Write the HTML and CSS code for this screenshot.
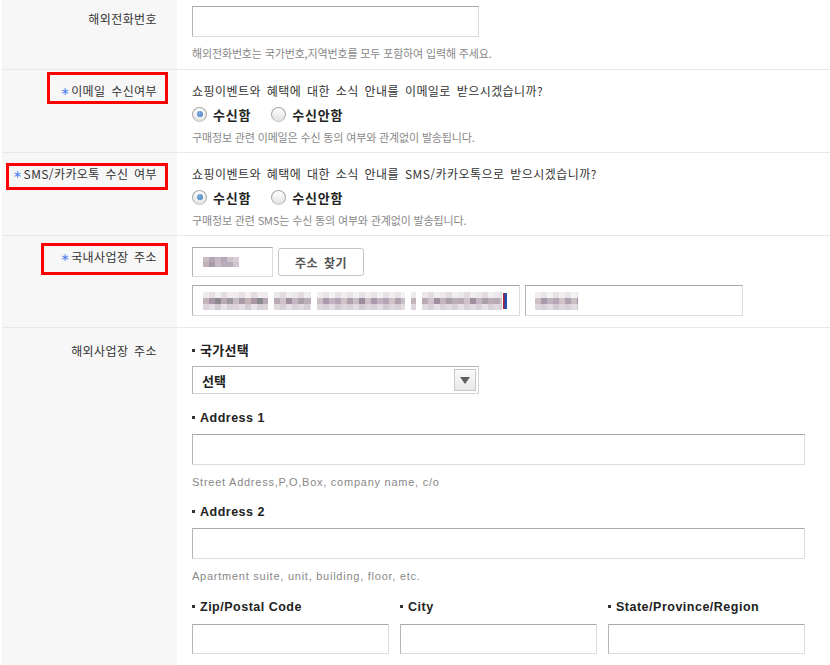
FILE: index.html
```html
<!DOCTYPE html>
<html lang="ko">
<head>
<meta charset="utf-8">
<title>회원정보</title>
<link rel="stylesheet" href="styles.css">
</head>
<body>
<div class="form">
  <div class="row row-phone">
    <div class="th">해외전화번호</div>
    <div class="td">
      <div class="field w287"></div>
      <p class="help">해외전화번호는 국가번호,지역번호를 모두 포함하여 입력해 주세요.</p>
    </div>
  </div>

  <div class="row row-opt">
    <div class="th"><span class="req">∗</span>이메일 수신여부<span class="mark mark-email"></span></div>
    <div class="td">
      <p class="q">쇼핑이벤트와 혜택에 대한 소식 안내를 이메일로 받으시겠습니까?</p>
      <div class="radios">
        <span class="radio on"></span><span class="rlabel">수신함</span>
        <span class="radio"></span><span class="rlabel">수신안함</span>
      </div>
      <p class="help">구매정보 관련 이메일은 수신 동의 여부와 관계없이 발송됩니다.</p>
    </div>
  </div>

  <div class="row row-opt">
    <div class="th"><span class="req">∗</span>SMS/카카오톡 수신 여부<span class="mark mark-sms"></span></div>
    <div class="td">
      <p class="q">쇼핑이벤트와 혜택에 대한 소식 안내를 SMS/카카오톡으로 받으시겠습니까?</p>
      <div class="radios">
        <span class="radio on"></span><span class="rlabel">수신함</span>
        <span class="radio"></span><span class="rlabel">수신안함</span>
      </div>
      <p class="help">구매정보 관련 SMS는 수신 동의 여부와 관계없이 발송됩니다.</p>
    </div>
  </div>

  <div class="row row-addr">
    <div class="th"><span class="req">∗</span>국내사업장 주소<span class="mark mark-addr"></span></div>
    <div class="td">
      <div class="line">
        <div class="field zip"><span class="mosaic m-zip"></span></div>
        <button class="btn" type="button">주소 찾기</button>
      </div>
      <div class="line">
        <div class="field addr1">
          <span class="mosaic m-a" style="width:65px"></span>
          <span class="mosaic m-b" style="width:37px"></span>
          <span class="mosaic m-c" style="width:88px"></span>
          <span class="mosaic m-a" style="width:5px"></span>
          <span class="mosaic m-b" style="width:80px"></span>
          <span class="cursor"></span>
        </div>
        <div class="field addr2"><span class="mosaic m-c" style="width:43px"></span></div>
      </div>
    </div>
  </div>

  <div class="row row-intl">
    <div class="th">해외사업장 주소</div>
    <div class="td">
      <p class="sub ko"><span class="bul"></span>국가선택</p>
      <div class="select"><span>선택</span><span class="arrow"></span></div>
      <p class="sub en gap15"><span class="bul"></span>Address 1</p>
      <div class="field full"></div>
      <p class="help en">Street Address,P,O,Box, company name, c/o</p>
      <p class="sub en gap14"><span class="bul"></span>Address 2</p>
      <div class="field full"></div>
      <p class="help en">Apartment suite, unit, building, floor, etc.</p>
      <div class="cols">
        <div class="col">
          <p class="sub en"><span class="bul"></span>Zip/Postal Code</p>
          <div class="field h30"></div>
        </div>
        <div class="col">
          <p class="sub en"><span class="bul"></span>City</p>
          <div class="field h30"></div>
        </div>
        <div class="col">
          <p class="sub en"><span class="bul"></span>State/Province/Region</p>
          <div class="field h30"></div>
        </div>
      </div>
    </div>
  </div>
</div>
</body>
</html>
```

FILE: styles.css
```css
* { box-sizing: border-box; }
html, body { margin: 0; padding: 0; background: #fff; }
body {
  font-family: "Noto Sans CJK KR", "Liberation Sans", sans-serif;
  font-size: 12px;
  color: #333;
  width: 830px;
  height: 665px;
  overflow: hidden;
}
p { margin: 0; }

.form { margin-left: 2px; }

.row {
  display: grid;
  grid-template-columns: 175px 1fr;
  border-bottom: 1px solid #e8e8e8;
}
.th {
  position: relative;
  background: #f7f7f7;
  text-align: right;
  padding-right: 20px;
  line-height: 16px;
  color: #333;
  letter-spacing: 0.4px;
  word-spacing: 2px;
}
.td {
  padding-left: 15px;
  padding-right: 25px;
}

.row-phone .th { padding-top: 11px; }
.row-phone .td { padding-top: 6px; padding-bottom: 8px; }
.row-opt .th { padding-top: 13px; }
.row-opt .td { padding-top: 13px; padding-bottom: 7px; }
.row-addr .th { padding-top: 13px; }
.row-addr .td { padding-top: 11px; padding-bottom: 11px; }
.row-intl .th { padding-top: 15px; }
.row-intl .td { padding-top: 14px; padding-bottom: 30px; }

.req {
  color: #4d7ff0;
  font-family: "DejaVu Sans", sans-serif;
  font-size: 11px;
  margin-right: 1px;
  position: relative;
  top: -1px;
}

.mark {
  position: absolute;
  border: 3px solid #ff0000;
}
.mark-email { left: 45px; top: 2px; width: 121px; height: 32px; }
.mark-sms { left: 4px; top: 10px; width: 162px; height: 27px; }
.mark-addr { left: 39px; top: 7px; width: 127px; height: 32px; }

.field {
  height: 31px;
  border: 1px solid #dcdcdc;
  border-top-color: #a9a9a9;
  border-left-color: #b5b5b5;
  background: #fff;
}
.w287 { width: 287px; }
.full { width: 613px; }
.h30 { height: 30px; }

.help {
  margin-top: 8px;
  line-height: 16px;
  font-size: 11px;
  color: #888;
  letter-spacing: -0.15px;
}
.help.en {
  margin-top: 9px;
  font-family: "Liberation Sans", sans-serif;
  letter-spacing: 0.75px;
}

.q {
  line-height: 16px;
  font-size: 12px;
  color: #333;
  letter-spacing: 0.45px;
  word-spacing: 2px;
}

.radios {
  display: flex;
  align-items: center;
  height: 16px;
  margin-top: 7px;
  margin-bottom: -1px;
}
.radio {
  width: 15px;
  height: 15px;
  border-radius: 50%;
  border: 1px solid #a8a8a8;
  border-bottom-color: #c8c8c8;
  background: linear-gradient(#ffffff, #e2e2e2);
  display: flex;
  align-items: center;
  justify-content: center;
  margin-right: 6px;
}
.radio.on::after {
  content: "";
  width: 6px;
  height: 6px;
  border-radius: 50%;
  background: radial-gradient(circle at 40% 35%, #7fb0e0, #3f78b8);
}
.rlabel {
  font-weight: bold;
  font-size: 13px;
  color: #222;
  margin-right: 20px;
  letter-spacing: 0.8px;
}

.line { display: flex; gap: 5px; align-items: center; }
.line + .line { margin-top: 8px; }
.zip {
  width: 81px;
  height: 30px;
  display: flex;
  align-items: center;
  padding-left: 10px;
}
.btn {
  width: 86px;
  height: 28px;
  border: 1px solid #c4c4c4;
  border-radius: 3px;
  background: #fff;
  font-family: "Noto Sans CJK KR", sans-serif;
  font-size: 12px;
  font-weight: bold;
  color: #555;
  padding: 0;
  letter-spacing: 0.5px;
  word-spacing: 2px;
}
.addr1 {
  width: 328px;
  display: flex;
  align-items: center;
  padding-left: 10px;
  gap: 6px;
}
.addr2 {
  width: 218px;
  display: flex;
  align-items: center;
  padding-left: 9px;
}

.mosaic {
  display: inline-block;
  height: 18px;
  background-repeat: no-repeat;
  background-size: 100% 6px;
  background-position: 0 0, 0 6px, 0 12px;
}
.m-zip {
  width: 36px;
  height: 10px;
  background-size: 100% 5px;
  background-position: 0 0, 0 5px;
  background-image:
    repeating-linear-gradient(90deg, #cbbcc4 0 6px, #b5a6b3 6px 12px, #c6b9c3 12px 18px, #b3a6b6 18px 24px, #cfc3cb 24px 30px, #d9d0d6 30px 36px),
    repeating-linear-gradient(90deg, #bfb0ba 0 6px, #a99aa9 6px 12px, #c8bbc6 12px 18px, #bbaebb 18px 24px, #b9acba 24px 30px, #cec5cf 30px 36px);
}
.m-a {
  background-image:
    repeating-linear-gradient(90deg, #efeaed 0 6px, #e6e0e5 6px 12px, #f3f0f2 12px 18px, #e3dde2 18px 24px, #f0ecef 24px 30px),
    repeating-linear-gradient(90deg, #c4b3bb 0 6px, #a996a6 6px 12px, #8c8a90 12px 18px, #b9aab6 18px 24px, #9c9a9c 24px 30px, #c9bcc5 30px 36px, #a89aa8 36px 42px),
    repeating-linear-gradient(90deg, #dcd4da 0 6px, #e4dde2 6px 12px, #d4ccd4 12px 18px, #e8e2e6 18px 24px, #d8d1d9 24px 30px);
}
.m-b {
  background-image:
    repeating-linear-gradient(90deg, #ece7eb 0 6px, #e2dce2 6px 12px, #f1eef0 12px 18px),
    repeating-linear-gradient(90deg, #b8a9b4 0 6px, #cfc2ca 6px 12px, #9f8fa0 12px 18px, #c3b6c1 18px 24px, #a9a0aa 24px 30px, #bcaeb6 30px 36px),
    repeating-linear-gradient(90deg, #e0d9de 0 6px, #d6cfd6 6px 12px, #e6e0e4 12px 18px, #d9d2da 18px 24px);
}
.m-c {
  background-image:
    repeating-linear-gradient(90deg, #f1edf0 0 6px, #e9e4e8 6px 12px, #f5f2f4 12px 18px, #e6e1e5 18px 24px),
    repeating-linear-gradient(90deg, #cdbfc4 0 6px, #a79aae 6px 12px, #c2b4c0 12px 18px, #b4a6b6 18px 24px, #d0c2c6 24px 30px, #aea2b0 30px 36px, #c8bec6 36px 42px, #9a8c9c 42px 48px),
    repeating-linear-gradient(90deg, #ddd6db 0 6px, #d7d0d8 6px 12px, #e3dde1 12px 18px, #d2cbd4 18px 24px);
}
.cursor {
  width: 4px;
  height: 16px;
  margin-left: -5px;
  background: linear-gradient(90deg, #b02030 0 1px, #5a3a70 1px 2px, #2050b0 2px 4px);
}

.sub {
  line-height: 16px;
  font-weight: bold;
  color: #222;
}
.bul {
  display: inline-block;
  width: 3px;
  height: 3px;
  background: #333;
  margin-right: 5px;
  vertical-align: middle;
  position: relative;
  top: -1px;
}
.sub.ko { font-size: 13px; letter-spacing: 0.3px; }
.sub.en {
  font-family: "Liberation Sans", sans-serif;
  font-size: 12.5px;
  letter-spacing: 0.5px;
}
.sub + .field, .sub + .select { margin-top: 8px; }
.gap15 { margin-top: 16px; }
.gap14 { margin-top: 14px; }

.select {
  width: 287px;
  height: 28px;
  border: 1px solid #d2d2d2;
  border-top-color: #b4b4b4;
  border-left-color: #b4b4b4;
  display: flex;
  align-items: center;
  justify-content: space-between;
  padding: 0 2px 0 9px;
  font-weight: bold;
  font-size: 13px;
  color: #222;
}
.arrow {
  width: 22px;
  height: 22px;
  border: 1px solid #c8c8c8;
  background: linear-gradient(#fafafa, #e8e8e8);
  position: relative;
}
.arrow::after {
  content: "";
  position: absolute;
  left: 5px;
  top: 7px;
  border-left: 5px solid transparent;
  border-right: 5px solid transparent;
  border-top: 7px solid #5e5e5e;
}

.cols {
  display: grid;
  grid-template-columns: 197px 197px 197px;
  column-gap: 11px;
  margin-top: 15px;
}
.col .sub + .field { margin-top: 9px; }
```
